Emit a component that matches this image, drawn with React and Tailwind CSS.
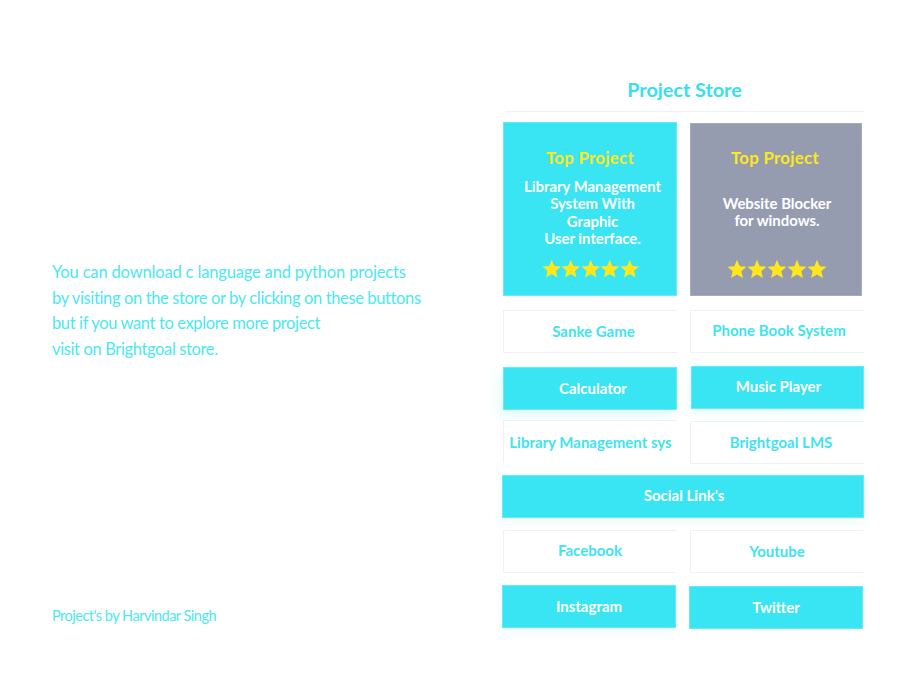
import React from 'react';

const Stars = ({ className, size = 'w-[19.5px] h-[19.5px]' }) => (
  <div className={`flex justify-center ${className}`}>
    {[0, 1, 2, 3, 4].map((i) => (
      <svg key={i} viewBox="0 0 24 24" className={`${size} shrink-0 text-[#ffe71c]`} fill="currentColor">
        <polygon points="12,1 15.2,8.6 23.4,9.3 17.2,14.7 19.1,22.8 12,18.5 4.9,22.8 6.8,14.7 0.6,9.3 8.8,8.6" />
      </svg>
    ))}
  </div>
);

const OutlineBtn = ({ label, className = '' }) => (
  <div className={`w-[174px] h-[43px] flex items-center justify-center bg-white border border-[#f0f1f3] border-r-0 text-[#3fe3f2] text-[15px] font-bold ${className}`}>
    {label}
  </div>
);

const FilledBtn = ({ label, className = '' }) => (
  <div className={`h-[43px] flex items-center justify-center bg-[#39e4f3] border border-[#62ecf7] text-white text-[15px] font-bold ${className}`}>
    {label}
  </div>
);

export default function App() {
  return (
    <div className="w-[920px] h-[690px] bg-white flex font-['Lato','Liberation_Sans',sans-serif] overflow-hidden">
      {/* left copy */}
      <div className="w-[502px] shrink-0 pl-[52px] pt-[260px] flex flex-col">
        <p className="text-[#4be7f5] text-[16.5px] leading-[25.7px] tracking-[-0.37px] whitespace-nowrap">
          <span className="tracking-[-0.16px]">You can download c language and python projects</span><br />
          by visiting on the store or by clicking on these buttons<br />
          but if you want to explore more project<br />
          visit on Brightgoal store.
        </p>
        <p className="mt-[243px] text-[#4be7f5] text-[14.5px] leading-[20px] tracking-[-0.5px]">Project's by Harvindar Singh</p>
      </div>

      {/* store column */}
      <div className="w-[362px] shrink-0 pt-[77px] flex flex-col">
        <h2 className="h-[26px] ml-[3px] text-center text-[#36e0f0] text-[19.8px] leading-[25px] font-bold">Project Store</h2>
        <div className="mt-[8px] ml-[3px] h-px bg-[#f1f2f4]" />

        <div className="mt-[10px] flex items-start gap-[13px] pl-px">
          <div className="w-[174px] h-[174px] bg-[#39e4f3] border border-[#62ecf7] flex flex-col items-center pt-[26px]">
            <div className="text-[#ffe71c] text-[16.8px] leading-[18px] font-bold tracking-[0.3px]">Top Project</div>
            <div className="mt-[11px] text-white text-[14.9px] leading-[17.4px] font-bold text-center ml-[5px]">
              Library Management<br />System With<br />Graphic<br />User interface.
            </div>
            <Stars className="mt-[11px] ml-[1px]" />
          </div>
          <div className="w-[172px] h-[173px] mt-px bg-[#959cb0] border border-[#a5abbd] flex flex-col items-center pt-[25px]">
            <div className="text-[#ffe71c] text-[16.8px] leading-[18px] font-bold tracking-[0.3px] mr-[2px]">Top Project</div>
            <div className="mt-[28px] text-white text-[14.9px] leading-[17.4px] font-bold text-center ml-[2px]">
              Website Blocker<br />for windows.
            </div>
            <Stars className="mt-[29px] ml-[2px]" size="w-[20px] h-[20px]" />
          </div>
        </div>

        <div className="mt-[14px] flex gap-[13px] pl-px">
          <OutlineBtn label={<span className="ml-[6px]">Sanke Game</span>} />
          <OutlineBtn label={<span className="ml-[3px] -mt-[2px]">Phone Book System</span>} />
        </div>

        <div className="mt-[13px] flex items-start gap-[14px] pl-px">
          <FilledBtn label={<span className="ml-[6px]">Calculator</span>} className="w-[174px] mt-px shadow-[-4px_7px_10px_rgba(57,228,243,0.14)]" />
          <FilledBtn label={<span className="ml-[2px] -mt-[2px]">Music Player</span>} className="w-[173px] shadow-[0_3px_10px_rgba(57,228,243,0.14)]" />
        </div>

        <div className="mt-[10px] flex items-start gap-[13px] pl-px">
          <OutlineBtn label={<span className="mt-[1px]">Library Management sys</span>} className="border-b-0" />
          <OutlineBtn label={<span className="ml-[7px]">Brightgoal LMS</span>} className="mt-px" />
        </div>

        <FilledBtn label={<span className="ml-[2px] -mt-[2px]">Social Link's</span>} className="mt-[11px] w-[362px] shadow-[0_3px_10px_rgba(57,228,243,0.1)]" />

        <div className="mt-[12px] flex gap-[13px] pl-px">
          <OutlineBtn label={<span className="ml-[-1px] -mt-[2px]">Facebook</span>} />
          <OutlineBtn label={<span className="ml-[-1px]">Youtube</span>} />
        </div>

        <div className="mt-[12px] flex items-start gap-[13px]">
          <FilledBtn label="Instagram" className="w-[174px] h-[42px] shadow-[0_4px_10px_rgba(57,228,243,0.1)]" />
          <FilledBtn label="Twitter" className="w-[174px] mt-px" />
        </div>
      </div>
    </div>
  );
}
